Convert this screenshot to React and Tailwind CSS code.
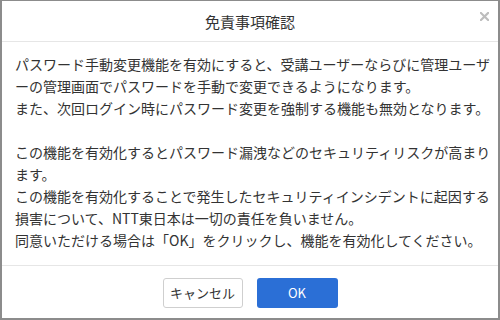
import React from "react";

const lines1 = [
  "パスワード手動変更機能を有効にすると、受講ユーザーならびに管理ユーザ",
  "ーの管理画面でパスワードを手動で変更できるようになります。",
  "また、次回ログイン時にパスワード変更を強制する機能も無効となります。",
];

const lines2 = [
  "この機能を有効化するとパスワード漏洩などのセキュリティリスクが高まり",
  "ます。",
  "この機能を有効化することで発生したセキュリティインシデントに起因する",
  "損害について、NTT東日本は一切の責任を負いません。",
  "同意いただける場合は「OK」をクリックし、機能を有効化してください。",
];

const Disclaimer = () => {
  return (
    <div
      className="w-[500px] h-[320px] bg-white border-t border-l-2 border-r-2 border-b-2 border-[#8c8c8c] flex flex-col text-[#333]"
      style={{ fontFamily: '"Noto Sans CJK JP", "Noto Sans", sans-serif' }}
    >
      {/* header */}
      <div className="relative h-[41px] flex items-center justify-center border-b border-[#e6e6e6]">
        <h2 className="text-[15px] leading-none">免責事項確認</h2>
        <button className="absolute right-[9px] top-[11px] w-[9px] h-[9px]">
          <svg viewBox="0 0 10 10" width="9" height="9">
            <path
              d="M1 1L9 9M9 1L1 9"
              stroke="#bdbdbd"
              strokeWidth="2.4"
              strokeLinecap="square"
            />
          </svg>
        </button>
      </div>

      {/* body */}
      <div className="flex-1 pl-[13px] pr-[4px] pt-[11px] text-[14px] leading-[22px] whitespace-nowrap">
        {lines1.map((l, i) => (
          <div key={i}>{l}</div>
        ))}
        <div className="h-[22px]" />
        {lines2.map((l, i) => (
          <div key={i}>{l}</div>
        ))}
      </div>

      {/* footer */}
      <div className="h-[53px] border-t border-[#e6e6e6] flex justify-center gap-[14px] pt-[12px]">
        <button className="w-[80px] h-[30px] bg-white border border-[#cfcfcf] rounded-[3px] text-[13px] text-[#333]">
          キャンセル
        </button>
        <button className="w-[81px] h-[30px] bg-[#2b6fd6] rounded-[3px] text-[13px] text-white">
          OK
        </button>
      </div>
    </div>
  );
};

export default function App() {
  return <Disclaimer />;
}
